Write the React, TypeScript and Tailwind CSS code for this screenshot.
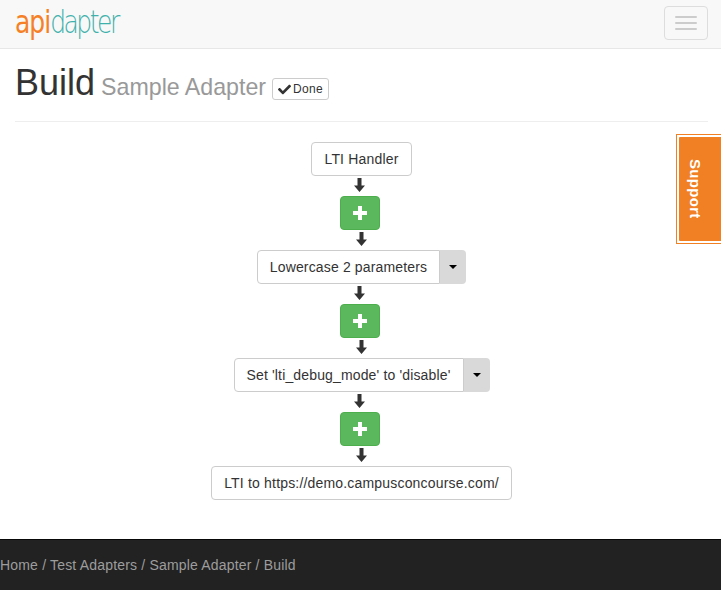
import { FaCheck } from 'react-icons/fa';

const sans = "font-['Liberation_Sans',Arial,sans-serif]";

function ArrowDown({ left = false }: { left?: boolean }) {
  return (
    <div className={`h-5 pb-[2px] flex items-center justify-center ${left ? 'mr-[4px]' : ''}`}>
      <svg width="11" height="14" viewBox="0 0 11 14" className="block">
        <path d="M3.5 0h4v7.5H11L5.5 14 0 7.5h3.5z" fill="#333" />
      </svg>
    </div>
  );
}

function AddButton() {
  return (
    <button className="w-10 h-[34px] mr-[3px] flex items-center justify-center rounded border border-[#4cae4c] bg-[#5cb85c]">
      <svg width="14" height="14" viewBox="0 0 14 14" className="block">
        <path d="M5 0h4v5h5v4H9v5H5V9H0V5h5z" fill="#fff" />
      </svg>
    </button>
  );
}

function StepButton({ label }: { label: string }) {
  return (
    <button className="h-[34px] px-3 rounded border border-[#ccc] bg-white text-sm tracking-[0.18px] text-[#333] whitespace-nowrap">
      {label}
    </button>
  );
}

function SplitStep({ label }: { label: string }) {
  return (
    <div className="flex h-[34px]">
      <button className="px-3 rounded-l border border-[#ccc] bg-white text-sm tracking-[0.15px] text-[#333] whitespace-nowrap">
        {label}
      </button>
      <button className="w-[26px] flex items-center justify-center rounded-r bg-[#d9d9d9]">
        <span className="w-0 h-0 border-x-4 border-x-transparent border-t-4 border-t-black" />
      </button>
    </div>
  );
}

export default function App() {
  return (
    <div className={`relative h-[590px] flex flex-col overflow-hidden bg-white ${sans}`}>
      <nav className="h-[49px] shrink-0 flex items-center justify-between pl-[15px] pr-[13px] bg-[#f8f8f8] border-b border-[#e7e7e7]">
        <div className="text-[25px] leading-none mt-[-3px] scale-y-[1.25] origin-left">
          <span className="font-['DejaVu_Sans',sans-serif] font-normal tracking-[-1px] text-[#f58025]">api</span>
          <span className="font-['DejaVu_Sans_ExtraLight','DejaVu_Sans',sans-serif] font-extralight tracking-[-2.5px] text-[#3fb1ac]">dapter</span>
        </div>
        <button className="w-11 h-[34px] mt-[-3px] flex flex-col items-center justify-center gap-1 rounded border border-[#ddd]">
          <span className="w-[22px] h-0.5 rounded-sm bg-[#ccc]" />
          <span className="w-[22px] h-0.5 rounded-sm bg-[#ccc]" />
          <span className="w-[22px] h-0.5 rounded-sm bg-[#ccc]" />
        </button>
      </nav>

      <main className="flex-1 pl-[15px] pr-[13px]">
        <div className="h-[73px] pt-[14px] flex items-baseline border-b border-[#eee]">
          <h1 className="text-[36px] leading-[40px] text-[#333]">Build</h1>
          <span className="ml-[6px] text-[23.2px] leading-none text-[#999]">Sample Adapter</span>
          <button className="self-start ml-[6px] mt-[15px] h-[22px] px-[5px] flex items-center gap-[2px] rounded-[3px] border border-[#ccc] bg-white text-xs tracking-[0.3px] text-[#333]">
            <FaCheck size={13} />
            Done
          </button>
        </div>

        <div className="mt-5 flex flex-col items-center">
          <StepButton label="LTI Handler" />
          <ArrowDown left />
          <AddButton />
          <ArrowDown />
          <SplitStep label="Lowercase 2 parameters" />
          <ArrowDown left />
          <AddButton />
          <ArrowDown />
          <SplitStep label="Set 'lti_debug_mode' to 'disable'" />
          <ArrowDown left />
          <AddButton />
          <ArrowDown />
          <StepButton label="LTI to https://demo.campusconcourse.com/" />
        </div>
      </main>

      <footer className="h-[51px] shrink-0 flex items-center bg-[#222] border-t border-[#080808] text-sm tracking-[0.18px] text-[#9d9d9d]">
        Home / Test Adapters / Sample Adapter / Build
      </footer>

      <div className="absolute top-[134px] right-0 w-[45px] h-[110px] p-0.5 pr-0 border border-r-0 border-[#f08023] bg-white">
        <div className="h-full flex items-center justify-center pr-[10px] rounded-l-[1px] bg-[#f08023]">
          <span className="[writing-mode:vertical-rl] text-[15px] tracking-[0.3px] font-bold text-white">Support</span>
        </div>
      </div>
    </div>
  );
}
